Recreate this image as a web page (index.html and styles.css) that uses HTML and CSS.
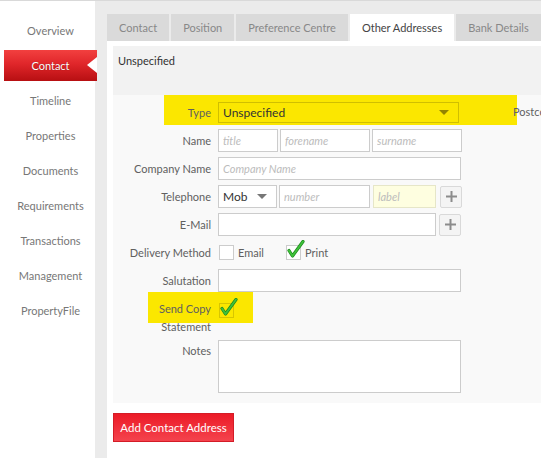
FILE: index.html
```html
<!DOCTYPE html>
<html lang="en">
<head>
    <meta charset="UTF-8">
    <meta name="viewport" content="width=device-width, initial-scale=1.0">
    <title>Contact - Other Addresses</title>
    <link rel="stylesheet" href="styles.css">
</head>
<body>
    <div class="page">
        <nav class="sidebar">
            <a class="nav-item">Overview</a>
            <a class="nav-item active">Contact</a>
            <a class="nav-item">Timeline</a>
            <a class="nav-item">Properties</a>
            <a class="nav-item">Documents</a>
            <a class="nav-item">Requirements</a>
            <a class="nav-item">Transactions</a>
            <a class="nav-item">Management</a>
            <a class="nav-item">PropertyFile</a>
        </nav>

        <main class="main">
            <ul class="tabs">
                <li class="tab">Contact</li>
                <li class="tab">Position</li>
                <li class="tab">Preference Centre</li>
                <li class="tab active">Other Addresses</li>
                <li class="tab">Bank Details</li>
                <li class="tab">Marketing</li>
            </ul>

            <div class="content">
                <div class="panel">
                    <div class="panel-head">Unspecified</div>
                    <div class="panel-body">
                        <div class="col-left">
                            <div class="row row-type">
                                <label class="lbl">Type</label>
                                <div class="select select-type">
                                    <span>Unspecified</span>
                                    <i class="caret"></i>
                                </div>
                            </div>

                            <div class="row">
                                <label class="lbl">Name</label>
                                <input type="text" class="inp w-title" placeholder="title">
                                <input type="text" class="inp w-fore" placeholder="forename">
                                <input type="text" class="inp w-sur" placeholder="surname">
                            </div>

                            <div class="row">
                                <label class="lbl">Company Name</label>
                                <input type="text" class="inp w-full" placeholder="Company Name">
                            </div>

                            <div class="row">
                                <label class="lbl">Telephone</label>
                                <div class="select select-mob">
                                    <span>Mob</span>
                                    <i class="caret"></i>
                                </div>
                                <input type="text" class="inp w-number" placeholder="number">
                                <input type="text" class="inp w-label tinted" placeholder="label">
                                <button class="btn-plus" aria-label="add">
                                    <svg width="11" height="11" viewBox="0 0 11 11"><path d="M5.5 0v11M0 5.5h11" stroke="#8c8c8c" stroke-width="2"/></svg>
                                </button>
                            </div>

                            <div class="row">
                                <label class="lbl">E-Mail</label>
                                <input type="text" class="inp w-email">
                                <button class="btn-plus" aria-label="add">
                                    <svg width="11" height="11" viewBox="0 0 11 11"><path d="M5.5 0v11M0 5.5h11" stroke="#8c8c8c" stroke-width="2"/></svg>
                                </button>
                            </div>

                            <div class="row">
                                <label class="lbl">Delivery Method</label>
                                <span class="option">
                                    <span class="check"></span>
                                    Email
                                </span>
                                <span class="option">
                                    <span class="check">
                                        <svg class="tick" width="20" height="20" viewBox="0 0 20 20"><path d="M3 10.5l3.5 5.5L17 1.5" fill="none" stroke="#1f8a1f" stroke-width="3.2" stroke-linecap="round" stroke-linejoin="round"/><path d="M3 10.5l3.5 5.5L17 1.5" fill="none" stroke="#3fc23a" stroke-width="1.8" stroke-linecap="round" stroke-linejoin="round"/></svg>
                                    </span>
                                    Print
                                </span>
                            </div>

                            <div class="row">
                                <label class="lbl">Salutation</label>
                                <input type="text" class="inp w-full">
                            </div>

                            <div class="row row-send">
                                <label class="lbl">Send Copy<br>Statement</label>
                                <span class="check check-send">
                                    <svg class="tick" width="20" height="20" viewBox="0 0 20 20"><path d="M3 10.5l3.5 5.5L17 1.5" fill="none" stroke="#1f8a1f" stroke-width="3.2" stroke-linecap="round" stroke-linejoin="round"/><path d="M3 10.5l3.5 5.5L17 1.5" fill="none" stroke="#3fc23a" stroke-width="1.8" stroke-linecap="round" stroke-linejoin="round"/></svg>
                                </span>
                            </div>

                            <div class="row row-notes">
                                <label class="lbl">Notes</label>
                                <textarea class="inp notes"></textarea>
                            </div>
                        </div>

                        <div class="col-right">
                            <div class="row row-postcode">
                                <label class="lbl-right">Postcode</label>
                            </div>
                        </div>
                    </div>
                </div>

                <button class="btn-add">Add Contact Address</button>
            </div>
        </main>
    </div>
</body>
</html>
```

FILE: styles.css
```css
html, body {
    margin: 0;
    overflow: hidden;
}
body {
    font-family: Lato, 'Open Sans', sans-serif;
    font-size: 11px;
    color: #444;
    background: #fff;
}
.page {
    display: flex;
    width: 541px;
    height: 458px;
    border-top: 1px solid #d9d9d9;
    box-sizing: border-box;
    overflow: hidden;
}

/* left navigation */
.sidebar {
    width: 95px;
    flex-shrink: 0;
    padding-top: 12px;
    background: #fff;
    position: relative;
    z-index: 1;
}
.nav-item {
    display: flex;
    align-items: center;
    justify-content: center;
    height: 35px;
    margin-left: 4px;
    width: 93px;
    color: #777;
    white-space: nowrap;
    cursor: pointer;
}
.nav-item.active {
    position: relative;
    height: 31px;
    margin: 2px 0 2px 4px;
    color: #fff;
    background: linear-gradient(#f2403f, #e0262a 45%, #b70f12);
    text-shadow: 0 0 1px rgba(90, 0, 0, 0.6);
}
.nav-item.active::after {
    content: "";
    position: absolute;
    right: 0;
    top: 7px;
    border-style: solid;
    border-width: 8.5px 10px 8.5px 0;
    border-color: transparent #fff transparent transparent;
}

/* main area */
.main {
    flex: 1;
    min-width: 0;
    background: #ebebeb;
    padding: 13px 0 0 12px;
    overflow: hidden;
}
.tabs {
    display: flex;
    list-style: none;
    margin: 0;
    padding: 0;
    height: 27px;
}
.tab {
    flex-shrink: 0;
    display: flex;
    align-items: center;
    height: 27px;
    padding: 0 12px;
    margin-right: 2px;
    background: #dadada;
    color: #888;
    white-space: nowrap;
}
.tab.active {
    background: #fff;
    color: #444;
}
.content {
    background: #fff;
    padding: 5px 0 0 6px;
    height: 100%;
    width: 600px;
}
.panel-head {
    height: 49px;
    box-sizing: border-box;
    padding: 8px 5px;
    background: #f2f2f2;
    color: #333;
}
.panel-body {
    display: flex;
    background: #f9f9f9;
    padding-bottom: 10px;
}
.col-left {
    width: 400px;
    flex-shrink: 0;
}
.col-right {
    flex: 1;
}

/* form rows */
.row {
    display: flex;
    align-items: center;
    height: 23px;
    margin-top: 5px;
    white-space: nowrap;
}
.lbl {
    width: 105px;
    flex-shrink: 0;
    padding-right: 7px;
    box-sizing: border-box;
    text-align: right;
    color: #606060;
    line-height: 18px;
}
.row-type {
    width: 404px;
    height: 30px;
    margin-top: 0;
    margin-bottom: 4px;
    box-sizing: border-box;
    padding-top: 7px;
    padding-bottom: 2px;
    background: linear-gradient(#fbe700, #fbe700) 51px 0 / 353px 30px no-repeat;
}
.row-type + .row {
    margin-top: 0;
}
.row-postcode {
    height: 30px;
    margin-top: 0;
    padding-top: 3px;
    box-sizing: border-box;
}
.lbl-right {
    color: #606060;
}

.inp {
    height: 23px;
    box-sizing: border-box;
    border: 1px solid #ccc;
    background: #fff;
    font-family: Lato, 'Open Sans', sans-serif;
    font-size: 11px;
    padding: 0 4px;
    margin: 0;
    color: #333;
    outline: none;
}
.inp::placeholder {
    color: #bcbcbc;
    font-style: italic;
}
.tinted {
    background: #fefee0;
    border-color: #e6e6c8;
}
.w-title { width: 60px; margin-right: 2px; }
.w-fore { width: 90px; margin-right: 2px; }
.w-sur { width: 90px; }
.w-full { width: 243px; }
.w-number { width: 91px; margin-right: 3px; }
.w-label { width: 63px; margin-right: 4px; }
.w-email { width: 218px; margin-right: 3px; }

.select {
    display: flex;
    align-items: center;
    justify-content: space-between;
    box-sizing: border-box;
    border: 1px solid #ccc;
    background: #fff;
    color: #333;
    font-size: 12px;
    padding: 0 9px 0 4px;
}
.select-type {
    width: 241px;
    height: 21px;
    border-color: rgba(110, 100, 0, 0.3);
    background: transparent;
}
.select-mob {
    width: 59px;
    height: 23px;
    margin-right: 2px;
}
.caret {
    width: 0;
    height: 0;
    border-style: solid;
    border-width: 5px 5px 0 5px;
    border-color: #777 transparent transparent transparent;
}
.select-type .caret {
    border-top-color: rgba(60, 50, 0, 0.55);
}
.btn-plus {
    width: 22px;
    height: 22px;
    padding: 0;
    display: flex;
    align-items: center;
    justify-content: center;
    border: 1px solid #d9d9d9;
    background: #f4f4f4;
    border-radius: 2px;
    cursor: pointer;
}

.option {
    display: flex;
    align-items: center;
    width: 67px;
    color: #606060;
}
.option:first-of-type {
    margin-left: 1px;
}
.check {
    position: relative;
    width: 15px;
    height: 15px;
    box-sizing: border-box;
    border: 1px solid #ccc;
    background: #fff;
    margin-right: 4px;
    flex-shrink: 0;
}
.tick {
    position: absolute;
    left: -1px;
    top: -6px;
}

.row-send {
    height: 44px;
    box-sizing: border-box;
    margin-top: 0;
    padding-top: 8px;
    align-items: flex-start;
    background: linear-gradient(#fbe700, #fbe700) 35px 0 / 105px 31px no-repeat;
}
.check-send {
    margin-left: 1px;
    margin-top: 3px;
    background: transparent;
    border-color: rgba(110, 100, 0, 0.25);
}
.row-notes {
    height: 53px;
    margin-top: 4px;
    align-items: flex-start;
}
.row-notes .lbl {
    padding-top: 2px;
}
.notes {
    width: 243px;
    height: 53px;
    resize: none;
}

.btn-add {
    margin-top: 10px;
    height: 29px;
    width: 121px;
    padding: 0;
    border: 1px solid #d41c27;
    background: linear-gradient(#ec1b27, #f4434d);
    color: #fff;
    font-family: Lato, 'Open Sans', sans-serif;
    font-size: 11.5px;
    white-space: nowrap;
    cursor: pointer;
}
```
